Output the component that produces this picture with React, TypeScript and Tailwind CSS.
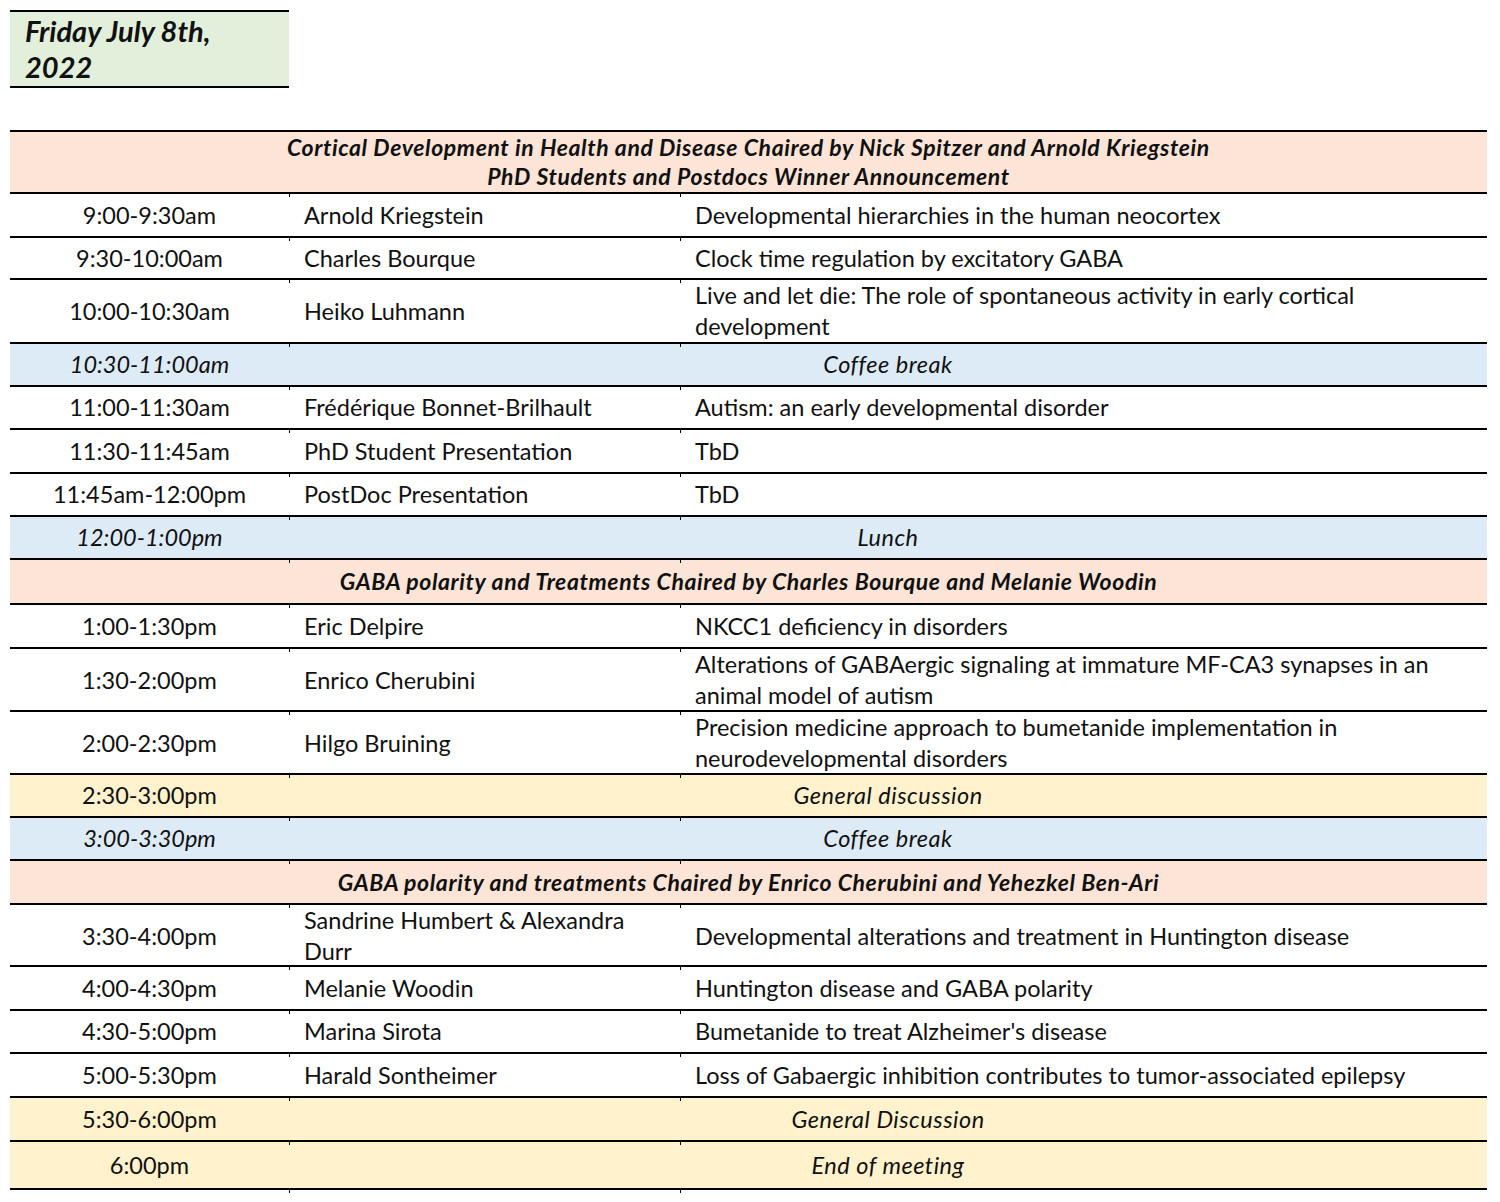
type Row =
  | { kind: 'session'; lines: string[]; h: number }
  | { kind: 'talk'; time: string; speaker: string[]; title: string[]; h: number }
  | { kind: 'break'; time: string; label: string; tone: 'blue' | 'yellow'; italicTime: boolean; h: number };

const ROWS: Row[] = [
  {
    kind: 'session',
    lines: [
      'Cortical Development in Health and Disease Chaired by Nick Spitzer and Arnold Kriegstein',
      'PhD Students and Postdocs Winner Announcement',
    ],
    h: 62,
  },
  { kind: 'talk', time: '9:00-9:30am', speaker: ['Arnold Kriegstein'], title: ['Developmental hierarchies in the human neocortex'], h: 44 },
  { kind: 'talk', time: '9:30-10:00am', speaker: ['Charles Bourque'], title: ['Clock time regulation by excitatory GABA'], h: 42 },
  {
    kind: 'talk',
    time: '10:00-10:30am',
    speaker: ['Heiko Luhmann'],
    title: ['Live and let die: The role of spontaneous activity in early cortical', 'development'],
    h: 64,
  },
  { kind: 'break', time: '10:30-11:00am', label: 'Coffee break', tone: 'blue', italicTime: true, h: 43 },
  { kind: 'talk', time: '11:00-11:30am', speaker: ['Frédérique Bonnet-Brilhault'], title: ['Autism: an early developmental disorder'], h: 43 },
  { kind: 'talk', time: '11:30-11:45am', speaker: ['PhD Student Presentation'], title: ['TbD'], h: 44 },
  { kind: 'talk', time: '11:45am-12:00pm', speaker: ['PostDoc Presentation'], title: ['TbD'], h: 43 },
  { kind: 'break', time: '12:00-1:00pm', label: 'Lunch', tone: 'blue', italicTime: true, h: 43 },
  { kind: 'session', lines: ['GABA polarity and Treatments Chaired by Charles Bourque and Melanie Woodin'], h: 45 },
  { kind: 'talk', time: '1:00-1:30pm', speaker: ['Eric Delpire'], title: ['NKCC1 deficiency in disorders'], h: 44 },
  {
    kind: 'talk',
    time: '1:30-2:00pm',
    speaker: ['Enrico Cherubini'],
    title: ['Alterations of GABAergic signaling at immature MF-CA3 synapses in an', 'animal model of autism'],
    h: 63,
  },
  {
    kind: 'talk',
    time: '2:00-2:30pm',
    speaker: ['Hilgo Bruining'],
    title: ['Precision medicine approach to bumetanide implementation in', 'neurodevelopmental disorders'],
    h: 63,
  },
  { kind: 'break', time: '2:30-3:00pm', label: 'General discussion', tone: 'yellow', italicTime: false, h: 43 },
  { kind: 'break', time: '3:00-3:30pm', label: 'Coffee break', tone: 'blue', italicTime: true, h: 43 },
  { kind: 'session', lines: ['GABA polarity and treatments Chaired by Enrico Cherubini and Yehezkel Ben-Ari'], h: 44 },
  {
    kind: 'talk',
    time: '3:30-4:00pm',
    speaker: ['Sandrine Humbert & Alexandra', 'Durr'],
    title: ['Developmental alterations and treatment in Huntington disease'],
    h: 62,
  },
  { kind: 'talk', time: '4:00-4:30pm', speaker: ['Melanie Woodin'], title: ['Huntington disease and GABA polarity'], h: 44 },
  { kind: 'talk', time: '4:30-5:00pm', speaker: ['Marina Sirota'], title: ["Bumetanide to treat Alzheimer's disease"], h: 43 },
  {
    kind: 'talk',
    time: '5:00-5:30pm',
    speaker: ['Harald Sontheimer'],
    title: ['Loss of Gabaergic inhibition contributes to tumor-associated epilepsy'],
    h: 44,
  },
  { kind: 'break', time: '5:30-6:00pm', label: 'General Discussion', tone: 'yellow', italicTime: false, h: 44 },
  { kind: 'break', time: '6:00pm', label: 'End of meeting', tone: 'yellow', italicTime: false, h: 48 },
];

function Lines({ lines }: { lines: string[] }) {
  return (
    <>
      {lines.map((l, i) => (
        <span key={i} className="block whitespace-nowrap">
          {l}
        </span>
      ))}
    </>
  );
}

// little column ticks that hang under each rule, like the sheet's gridlines
function Ticks() {
  return (
    <>
      <span aria-hidden className="absolute z-10 left-[279px] -bottom-[5px] w-px h-[3px] bg-black" />
      <span aria-hidden className="absolute z-10 left-[670px] -bottom-[5px] w-px h-[3px] bg-black" />
    </>
  );
}

function ScheduleRow({ row }: { row: Row }) {
  if (row.kind === 'session') {
    return (
      <div
        className="relative flex flex-col items-center justify-center bg-[#fce4d6] border-b-2 border-black font-bold italic text-center text-[23px] tracking-[0.6px] leading-[29px]"
        style={{ height: row.h }}
      >
        <Lines lines={row.lines} />
        <Ticks />
      </div>
    );
  }
  if (row.kind === 'break') {
    return (
      <div
        className={`relative grid grid-cols-[279px_1fr] border-b-2 border-black ${
          row.tone === 'blue' ? 'bg-[#ddebf7]' : 'bg-[#fff2cc]'
        }`}
        style={{ height: row.h }}
      >
        <div className={`flex items-center justify-center ${row.italicTime ? 'italic' : ''}`}>{row.time}</div>
        <div className="flex items-center justify-center italic tracking-[0.5px]">{row.label}</div>
        <Ticks />
      </div>
    );
  }
  return (
    <div
      className="relative grid grid-cols-[279px_391px_1fr] border-b-2 border-black bg-white"
      style={{ height: row.h }}
    >
      <div className="flex items-center justify-center">{row.time}</div>
      <div className="flex flex-col justify-center pl-[15px]">
        <Lines lines={row.speaker} />
      </div>
      <div className="flex flex-col justify-center pl-[15px]">
        <Lines lines={row.title} />
      </div>
      <Ticks />
    </div>
  );
}

export default function App() {
  return (
    <div className="w-[1500px] h-[1202px] bg-white text-[#111] font-['Lato',sans-serif] text-[23.5px] leading-[31px]">
      <div className="pt-[10px] pl-[10px]">
        <div className="w-[279px] h-[78px] bg-[#e2efda] border-y-2 border-black flex flex-col justify-center pl-[15px] font-bold italic text-[29px] leading-[36px]">
          <span>Friday July 8th,</span>
          <span>2022</span>
        </div>
      </div>

      <div className="mt-[42px] mx-[10px] w-[1477px] border-t-2 border-black">
        {ROWS.map((row, i) => (
          <ScheduleRow key={i} row={row} />
        ))}
      </div>
    </div>
  );
}
